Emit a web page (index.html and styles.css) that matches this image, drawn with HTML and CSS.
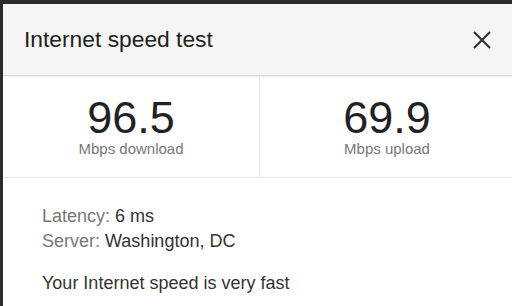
FILE: index.html
```html
<!DOCTYPE html>
<html lang="en">
<head>
  <meta charset="UTF-8" />
  <meta name="viewport" content="width=device-width, initial-scale=1.0"/>
  <title>Internet speed test</title>
  <link rel="stylesheet" href="styles.css">
</head>
<body>
  <div class="dialog">
    <header>
      <h1>Internet speed test</h1>
      <button class="close" aria-label="Close">
        <svg width="20" height="20" viewBox="0 0 20 20">
          <path d="M2 2 L18 18 M18 2 L2 18" stroke="#333" stroke-width="2.2" fill="none"/>
        </svg>
      </button>
    </header>

    <div class="speeds">
      <div class="speed">
        <div class="speed-value">96.5</div>
        <div class="speed-label">Mbps download</div>
      </div>
      <div class="speed">
        <div class="speed-value">69.9</div>
        <div class="speed-label">Mbps upload</div>
      </div>
    </div>

    <div class="details">
      <div class="detail"><span class="detail-key">Latency:</span> 6 ms</div>
      <div class="detail"><span class="detail-key">Server:</span> Washington, DC</div>
      <p class="verdict">Your Internet speed is very fast</p>
    </div>
  </div>
</body>
</html>
```

FILE: styles.css
```css
body {
  margin: 0;
  background: #2b2b2b;
  font-family: 'Liberation Sans', Arial, sans-serif;
  overflow: hidden;
  height: 306px;
}

.dialog {
  margin: 4px 0 0 3px;
  width: 511px;
  height: 302px;
  background: #fff;
}

header {
  display: flex;
  justify-content: space-between;
  align-items: center;
  height: 71px;
  padding: 0 22px 0 21px;
  background: #f5f5f5;
  border-bottom: 1px solid #d8d8d8;
  box-shadow: 0 1px 2px rgba(0, 0, 0, 0.08);
}

header h1 {
  margin: 0;
  font-size: 22.8px;
  font-weight: normal;
  color: #222;
}

.close {
  display: flex;
  padding: 0;
  border: none;
  background: none;
  cursor: pointer;
}

.speeds {
  display: grid;
  grid-template-columns: 256px 1fr;
  border-bottom: 1px solid #e8e8e8;
}

.speed {
  padding: 20px 0 19px;
  text-align: center;
}

.speed + .speed {
  border-left: 1px solid #e8e8e8;
}

.speed-value {
  font-size: 45px;
  line-height: 44px;
  color: #222;
}

.speed-label {
  font-size: 15px;
  line-height: 18px;
  color: #777;
}

.details {
  padding: 26px 0 0 39px;
  font-size: 18px;
  line-height: 25px;
  color: #333;
}

.detail-key {
  color: #777;
}

.verdict {
  margin: 17px 0 0;
}
```
